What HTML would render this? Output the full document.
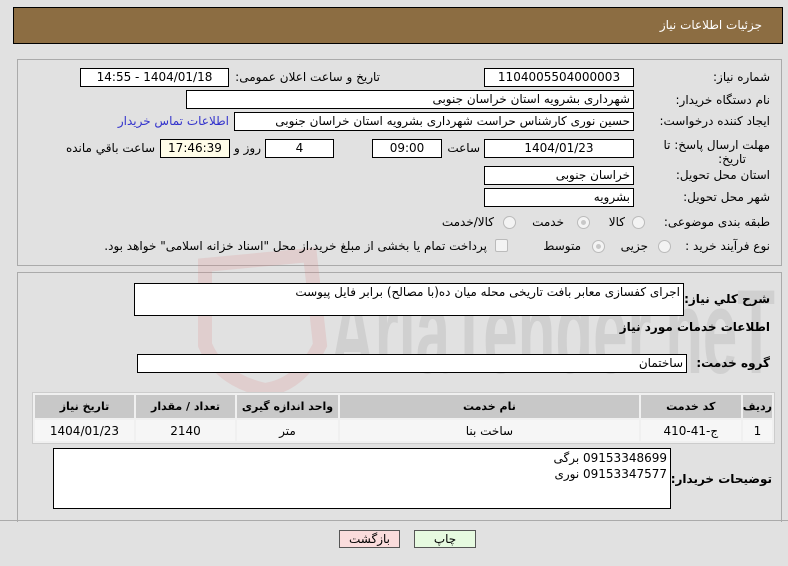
<!DOCTYPE html>
<html><head><meta charset="utf-8"><style>
*{box-sizing:border-box;margin:0;padding:0}
body{width:788px;height:566px;background:#e1e1e1;font-family:"DejaVu Sans","Liberation Sans",sans-serif;font-size:12px;color:#000;position:relative;overflow:hidden;direction:rtl}
.a{position:absolute;white-space:nowrap}
.box{position:absolute;background:#fff;border:1px solid #000;height:19px;line-height:17px;font-size:12px;padding:0 3px}
.c{text-align:center}
.lbl{position:absolute;white-space:nowrap;line-height:18px}
.b{font-weight:bold;font-size:12px;letter-spacing:-0.5px}
.rad{position:absolute;width:13px;height:13px;border-radius:50%;border:1px solid #bbb;background:#f3f3f3}
.rad.on::after{content:"";position:absolute;left:3px;top:3px;width:5px;height:5px;border-radius:50%;background:#c8c8c8}
table{position:absolute;left:32px;top:392px;width:743px;border-collapse:separate;border-spacing:2px;background:#f0f0f0;border:1px solid #ccc;direction:rtl}
th{background:#c8c8c8;height:23px;font-size:11px;font-weight:bold}
td{background:#f6f6f6;height:21px;text-align:center;font-size:12px}
</style></head><body>
<div class="a" style="left:13px;top:7px;width:770px;height:37px;background:#8c6d42;border:1px solid #000"></div>
<div class="a" style="right:26px;top:18px;color:#fff;font-size:12px">جزئیات اطلاعات نیاز</div>

<div class="a" style="left:17px;top:59px;width:765px;height:207px;border:1px solid #aaa"></div>
<div class="a" style="left:17px;top:272px;width:765px;height:250px;border-top:1px solid #aaa;border-left:1px solid #aaa;border-right:1px solid #aaa"></div>
<div class="a" style="left:0;top:520px;width:788px;height:1px;background:#aaa"></div>

<svg class="a" style="left:190px;top:245px" width="598" height="150"><text x="140" y="128" font-family="Liberation Sans" font-weight="bold" font-size="120" fill="rgba(150,150,150,0.22)" textLength="445" lengthAdjust="spacingAndGlyphs" direction="ltr">AriaTender.neT</text><path d="M15 20 L120 10 L130 100 Q110 140 75 145 Q30 135 15 100 Z" fill="none" stroke="rgba(220,120,120,0.18)" stroke-width="14"/></svg>

<div class="lbl" style="right:18px;top:68px">شماره نیاز:</div>
<div class="box c" style="left:484px;top:68px;width:150px">1104005504000003</div>
<div class="lbl" style="right:408px;top:68px">تاریخ و ساعت اعلان عمومی:</div>
<div class="box c" style="left:80px;top:68px;width:149px">1404/01/18 - 14:55</div>

<div class="lbl" style="right:18px;top:91px">نام دستگاه خریدار:</div>
<div class="box" style="left:186px;top:90px;width:448px">شهرداری بشرویه استان خراسان جنوبی</div>

<div class="lbl" style="right:18px;top:112px">ایجاد کننده درخواست:</div>
<div class="box" style="left:234px;top:112px;width:400px">حسین نوری کارشناس حراست شهرداری بشرویه استان خراسان جنوبی</div>
<div class="lbl" style="right:559px;top:112px;color:#3333cc">اطلاعات تماس خریدار</div>

<div class="lbl" style="right:18px;top:136px">مهلت ارسال پاسخ: تا</div>
<div class="lbl" style="right:42px;top:150px">تاریخ:</div>
<div class="box c" style="left:484px;top:139px;width:150px">1404/01/23</div>
<div class="lbl" style="right:308px;top:139px">ساعت</div>
<div class="box c" style="left:372px;top:139px;width:70px">09:00</div>
<div class="box c" style="left:265px;top:139px;width:69px">4</div>
<div class="lbl" style="right:527px;top:139px">روز و</div>
<div class="box c" style="left:160px;top:139px;width:70px;background:#fffde8">17:46:39</div>
<div class="lbl" style="right:633px;top:139px">ساعت باقي مانده</div>

<div class="lbl" style="right:18px;top:166px">استان محل تحویل:</div>
<div class="box" style="left:484px;top:166px;width:150px">خراسان جنوبی</div>
<div class="lbl" style="right:18px;top:188px">شهر محل تحویل:</div>
<div class="box" style="left:484px;top:188px;width:150px">بشرویه</div>

<div class="lbl" style="right:18px;top:213px">طبقه بندی موضوعی:</div>
<div class="rad" style="left:632px;top:216px"></div><div class="lbl" style="right:163px;top:213px">کالا</div>
<div class="rad on" style="left:577px;top:216px"></div><div class="lbl" style="right:224px;top:213px">خدمت</div>
<div class="rad" style="left:503px;top:216px"></div><div class="lbl" style="right:294px;top:213px">کالا/خدمت</div>

<div class="lbl" style="right:18px;top:237px">نوع فرآیند خرید :</div>
<div class="rad" style="left:658px;top:240px"></div><div class="lbl" style="right:140px;top:237px">جزیی</div>
<div class="rad on" style="left:592px;top:240px"></div><div class="lbl" style="right:207px;top:237px">متوسط</div>
<div class="a" style="left:495px;top:239px;width:13px;height:13px;border:1px solid #bbb;background:#f3f3f3;border-radius:2px"></div>
<div class="lbl" style="right:301px;top:237px">پرداخت تمام یا بخشی از مبلغ خرید،از محل "اسناد خزانه اسلامی" خواهد بود.</div>

<div class="lbl b" style="right:18px;top:290px">شرح كلي نياز:</div>
<div class="box" style="left:134px;top:283px;width:550px;height:33px;line-height:16px">اجرای کفسازی معابر بافت تاریخی محله میان ده(با مصالح) برابر فایل پیوست</div>
<div class="lbl b" style="right:18px;top:318px">اطلاعات خدمات مورد نیاز</div>
<div class="lbl b" style="right:18px;top:354px">گروه خدمت:</div>
<div class="box" style="left:137px;top:354px;width:550px">ساختمان</div>

<table><tr><th style="width:26px">ردیف</th><th style="width:100px">کد خدمت</th><th>نام خدمت</th><th style="width:101px">واحد اندازه گیری</th><th style="width:99px">تعداد / مقدار</th><th style="width:99px">تاریخ نیاز</th></tr>
<tr><td>1</td><td>ج-41-410</td><td>ساخت بنا</td><td>متر</td><td>2140</td><td>1404/01/23</td></tr></table>

<div class="lbl b" style="right:16px;top:470px">توضیحات خریدار:</div>
<div class="box" style="left:53px;top:448px;width:618px;height:61px;line-height:16px;padding-top:1px">09153348699 برگی<br>09153347577 نوری</div>

<div class="a c" style="left:339px;top:530px;width:61px;height:18px;background:#fadcdc;border:1px solid #555;line-height:16px">بازگشت</div>
<div class="a c" style="left:414px;top:530px;width:62px;height:18px;background:#e6fae0;border:1px solid #555;line-height:16px">چاپ</div>
</body></html>
